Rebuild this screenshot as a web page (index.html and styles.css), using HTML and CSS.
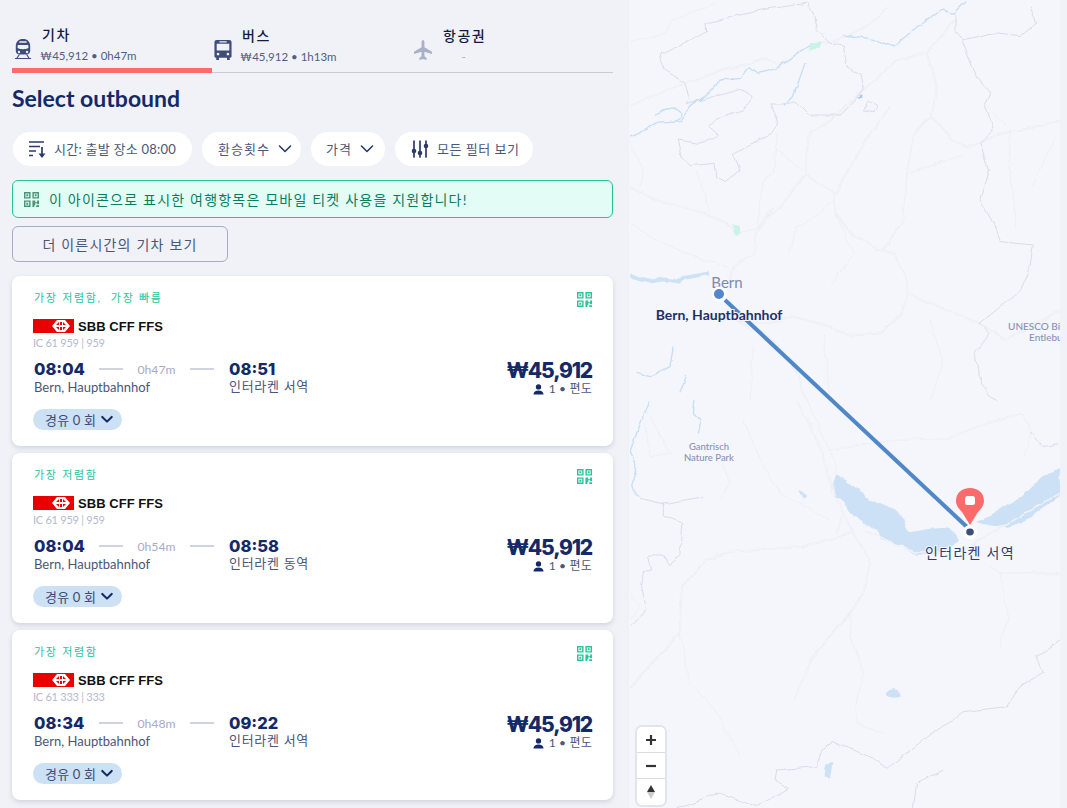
FILE: index.html
```html
<!DOCTYPE html>
<html lang="ko">
<head>
<meta charset="utf-8">
<title>Select outbound</title>
<link rel="stylesheet" href="styles.css">
</head>
<body>
<svg class="sprite" aria-hidden="true">
  <symbol id="i-qr" viewBox="0 0 16 16">
    <path fill-rule="evenodd" d="M0 0h7v7H0zM1.500 1.500v4h4v-4zM9 0h7v7H9zM10.500 1.500v4h4v-4zM0 9h7v7H0zM1.500 10.500v4h4v-4z"/>
    <path d="M2.500 2.500h2v2h-2zM11.500 2.500h2v2h-2zM2.500 11.500h2v2h-2zM9 9h3v2h2V9h2v4h-2v-1h-2v2h-1v2H9zM13 14h3v2h-3z"/>
  </symbol>
  <symbol id="i-chev" viewBox="0 0 14 10">
    <path d="M1.500 2 7 7.500 12.500 2" fill="none" stroke="currentColor" stroke-width="1.600" stroke-linecap="round" stroke-linejoin="round"/>
  </symbol>
  <symbol id="i-chev-bold" viewBox="0 0 14 10">
    <path d="M1.500 2 7 7.500 12.500 2" fill="none" stroke="currentColor" stroke-width="2.400" stroke-linecap="round" stroke-linejoin="round"/>
  </symbol>
  <symbol id="i-person" viewBox="0 0 12 12">
    <circle cx="6" cy="3.200" r="2.900"/>
    <path d="M0.500 11.500C0.500 8.500 3 7 6 7s5.500 1.500 5.500 4.500z"/>
  </symbol>
  <filter id="organic" x="0" y="0" width="100%" height="100%" color-interpolation-filters="sRGB">
    <feTurbulence type="fractalNoise" baseFrequency=".07" numOctaves="3" seed="4" result="n"/>
    <feDisplacementMap in="SourceGraphic" in2="n" scale="5" xChannelSelector="R" yChannelSelector="G" result="d"/>
    <feGaussianBlur in="d" stdDeviation=".3"/>
  </filter>
</svg>

<div class="page">
  <main class="results">
    <nav class="tabs">
      <div class="tab tab-active">
        <svg class="tab-icon" viewBox="0 0 20 22"><path fill="#3f4d7c" fill-rule="evenodd" d="M10 0c5 0 8 3 8 8v5c0 2.500-1.500 4-4 4H6c-2.500 0-4-1.500-4-4V8c0-5 3-8 8-8zM5 6.500c-.5 0-1 .5-1 1V10c1.500 1 3.800 1.300 6 1.300s4.500-.3 6-1.300V7.500c0-.5-.5-1-1-1zM6 2.500v1.500h8V2.500zM5.500 13a1.300 1.300 0 1 0 0 2.600 1.300 1.300 0 0 0 0-2.600zm9 0a1.300 1.300 0 1 0 0 2.600 1.300 1.300 0 0 0 0-2.600z"/><path fill="none" stroke="#3f4d7c" stroke-width="1.200" d="M1 21.500h18M6 17l-3 4.500M14 17l3 4.500"/></svg>
        <div class="tab-text"><span class="tab-name">기차</span><span class="tab-sub">₩45,912 • 0h47m</span></div>
      </div>
      <div class="tab">
        <svg class="tab-icon" viewBox="0 0 20 22"><path fill="#3f4d7c" fill-rule="evenodd" d="M3 0h14c1.500 0 2.500 1 2.500 2.500V18c0 .8-.5 1.500-1.500 1.500h-.5V22h-3v-2.500h-9V22h-3v-2.500H2c-1 0-1.500-.7-1.500-1.500V2.500C.5 1 1.500 0 3 0zM3 4v7.500h14V4zM4.500 14a1.500 1.500 0 1 0 0 3 1.500 1.500 0 0 0 0-3zm11 0a1.500 1.500 0 1 0 0 3 1.500 1.500 0 0 0 0-3zM6 1.300v1.400h8V1.300z"/></svg>
        <div class="tab-text"><span class="tab-name">버스</span><span class="tab-sub">₩45,912 • 1h13m</span></div>
      </div>
      <div class="tab">
        <svg class="tab-icon" viewBox="0 0 20 22"><path fill="#a9b0c8" d="M10 0c1 0 1.600 1.500 1.600 3v5l8.400 5v2.500l-8.400-2.500v5l2.400 2V22L10 21l-4 1v-2l2.400-2v-5L0 15.500V13l8.400-5V3c0-1.500.6-3 1.600-3z"/></svg>
        <div class="tab-text tab-text-plain"><span class="tab-name">항공권</span><span class="tab-sub tab-sub-none">-</span></div>
      </div>
    </nav>

    <h1 class="title">Select outbound</h1>

    <div class="filters">
      <button class="pill pill-time">
        <svg class="pill-icon" viewBox="0 0 18 18"><path fill="none" stroke="#2b3a6b" stroke-width="1.700" d="M1 2h15M1 6.500h11M1 11h7M1 15.500h4M14 7v9.500"/><path fill="#2b3a6b" d="M10.500 13.500h7L14 18z"/></svg>
        <span>시간: 출발 장소 08:00</span>
      </button>
      <button class="pill pill-drop pill-transfers"><span>환승횟수</span><svg class="pill-chev"><use href="#i-chev"/></svg></button>
      <button class="pill pill-drop pill-price"><span>가격</span><svg class="pill-chev"><use href="#i-chev"/></svg></button>
      <button class="pill pill-all">
        <svg class="pill-icon" viewBox="0 0 18 18"><path fill="none" stroke="#2b3a6b" stroke-width="1.700" stroke-linecap="round" d="M3 1v16M9 1v16M15 1v16"/><circle cx="3" cy="11" r="2.300" fill="#2b3a6b"/><circle cx="9" cy="13" r="2.300" fill="#2b3a6b"/><circle cx="15" cy="6" r="2.300" fill="#2b3a6b"/></svg>
        <span>모든 필터 보기</span>
      </button>
    </div>

    <div class="notice">
      <svg class="notice-qr"><use href="#i-qr"/></svg>
      <span>이 아이콘으로 표시한 여행항목은 모바일 티켓 사용을 지원합니다!</span>
    </div>

    <button class="earlier">더 이른시간의 기차 보기</button>

    <article class="card">
      <div class="card-top"><span class="tag">가장 저렴함,&nbsp; 가장 빠름</span><svg class="card-qr"><use href="#i-qr"/></svg></div>
      <div class="brand"><span class="sbb-flag"><svg viewBox="0 0 24 14"><path fill="#fff" d="M8 1h8l5 6-5 6H8L3 7zM10 3 7 6h3V3zm4 0v3h3zM11 3v3h2V3zm0 5v3h2V8zm-4 0 3 3V8zm7 0v3l3-3z" fill-rule="evenodd"/></svg></span><span class="sbb-name">SBB CFF FFS</span></div>
      <div class="train-no">IC 61 959 | 959</div>
      <div class="trip">
        <div class="journey">
          <div class="stop"><strong class="time">08:04</strong><span class="place">Bern, Hauptbahnhof</span></div>
          <div class="dur"><i class="dash"></i><span>0h47m</span><i class="dash"></i></div>
          <div class="stop"><strong class="time">08:51</strong><span class="place place-ko">인터라켄 서역</span></div>
        </div>
        <div class="fare"><span class="price">₩45,912</span><span class="fare-sub"><svg class="person"><use href="#i-person"/></svg>1 • 편도</span></div>
      </div>
      <div class="stops"><span>경유 0 회</span><svg class="stops-chev"><use href="#i-chev-bold"/></svg></div>
    </article>

    <article class="card">
      <div class="card-top"><span class="tag">가장 저렴함</span><svg class="card-qr"><use href="#i-qr"/></svg></div>
      <div class="brand"><span class="sbb-flag"><svg viewBox="0 0 24 14"><path fill="#fff" d="M8 1h8l5 6-5 6H8L3 7zM10 3 7 6h3V3zm4 0v3h3zM11 3v3h2V3zm0 5v3h2V8zm-4 0 3 3V8zm7 0v3l3-3z" fill-rule="evenodd"/></svg></span><span class="sbb-name">SBB CFF FFS</span></div>
      <div class="train-no">IC 61 959 | 959</div>
      <div class="trip">
        <div class="journey">
          <div class="stop"><strong class="time">08:04</strong><span class="place">Bern, Hauptbahnhof</span></div>
          <div class="dur"><i class="dash"></i><span>0h54m</span><i class="dash"></i></div>
          <div class="stop"><strong class="time">08:58</strong><span class="place place-ko">인터라켄 동역</span></div>
        </div>
        <div class="fare"><span class="price">₩45,912</span><span class="fare-sub"><svg class="person"><use href="#i-person"/></svg>1 • 편도</span></div>
      </div>
      <div class="stops"><span>경유 0 회</span><svg class="stops-chev"><use href="#i-chev-bold"/></svg></div>
    </article>

    <article class="card">
      <div class="card-top"><span class="tag">가장 저렴함</span><svg class="card-qr"><use href="#i-qr"/></svg></div>
      <div class="brand"><span class="sbb-flag"><svg viewBox="0 0 24 14"><path fill="#fff" d="M8 1h8l5 6-5 6H8L3 7zM10 3 7 6h3V3zm4 0v3h3zM11 3v3h2V3zm0 5v3h2V8zm-4 0 3 3V8zm7 0v3l3-3z" fill-rule="evenodd"/></svg></span><span class="sbb-name">SBB CFF FFS</span></div>
      <div class="train-no">IC 61 333 | 333</div>
      <div class="trip">
        <div class="journey">
          <div class="stop"><strong class="time">08:34</strong><span class="place">Bern, Hauptbahnhof</span></div>
          <div class="dur"><i class="dash"></i><span>0h48m</span><i class="dash"></i></div>
          <div class="stop"><strong class="time">09:22</strong><span class="place place-ko">인터라켄 서역</span></div>
        </div>
        <div class="fare"><span class="price">₩45,912</span><span class="fare-sub"><svg class="person"><use href="#i-person"/></svg>1 • 편도</span></div>
      </div>
      <div class="stops"><span>경유 0 회</span><svg class="stops-chev"><use href="#i-chev-bold"/></svg></div>
    </article>
  </main>

  <section class="map">
    <svg class="map-canvas" viewBox="0 0 431 808">
      <g filter="url(#organic)">
      <g transform="translate(1 0) scale(.33333)">
        <g class="road-a">
          <path d="M0 315 150 255 250 220 400 175 450 195 500 160 560 130 600 130 640 110 720 75 770 20M0 560 60 590 100 610 200 630 290 670 320 700 375 690 450 620 520 530 525 510 540 400 590 370 700 270 800 180 890 160 980 50M525 520 610 580 620 640 660 700 750 750 790 760 830 830 835 880 815 940 750 1000 670 1010 600 980 490 950 420 970 320 960M890 160 920 260 905 350 970 420 1010 440 1120 400 1290 365M610 590 690 450 780 320M840 520 1000 465M760 750 820 660 830 530 850 400 905 350M830 880 950 930 1050 970 1130 1020 1290 930M300 950 440 1030 500 1120 530 1200M430 620 380 700 370 760 310 800 295 850"/>
        </g>
        <g class="road-b">
          <path d="M0 315 150 255 250 220 400 175 450 195 500 160 560 130 600 130 640 110 720 75 770 20M0 560 60 590 100 610 200 630 290 670 320 700 375 690 450 620 520 530 525 510 540 400 590 370 700 270 800 180 890 160 980 50M525 520 610 580 620 640 660 700 750 750 790 760 830 830 835 880 815 940 750 1000 670 1010 600 980 490 950 420 970 320 960M890 160 920 260 905 350 970 420 1010 440 1120 400 1290 365M610 590 690 450 780 320M840 520 1000 465M760 750 820 660 830 530 850 400 905 350M830 880 950 930 1050 970 1130 1020 1290 930M300 950 440 1030 500 1120 530 1200M430 620 380 700 370 760 310 800 295 850"/>
        </g>
        <path class="road-thin" d="M0 125 100 100 130 60 260 10M440 450 520 510M440 400 430 520 400 540 380 690M200 510 240 640M0 440 40 500 30 560M0 670 80 720 190 770 290 800M480 760 500 680 570 640 610 600M600 860 670 760 620 640M1140 380 1140 500 1160 680M1205 560 1280 400M1070 310 1130 380M900 960 940 1090 900 1200M370 1040 360 1200M580 1000 600 1200"/>
        <g class="river">
          <path d="M0 410 80 370 150 365 180 320 230 285 260 250 290 240 330 235 360 200 385 220 440 205 500 160 540 135M640 105 720 115 790 140 850 90 935 30 970 40 1005 5M525 190 490 290 460 320"/>
          <path class="river-wide" d="M0 825 30 838 60 845 100 838 150 845 170 832 240 820"/>
          <path d="M75 350Q110 310 140 330T130 365"/>
          <path d="M130 1040 120 1100 60 1130 20 1120M170 1125 150 1180"/>
        </g>
        <path class="border" d="M90 165 230 95 228 70 330 45 420 25 530 10 550 40 560 90 600 130 640 135 650 200 690 225 700 265 660 320 630 345 540 345 500 305 460 315 420 315 445 370 420 405 310 460 330 510 285 545 260 530 255 490 180 497 155 470 145 420 205 430 265 410 240 380 270 350 340 330 370 290 330 265 165 315 180 300 165 250 105 210ZM975 40 975 90 1000 120 1080 100 1170 110 1220 70 1200 20M995 120 1040 230 1080 280 1065 310 1090 390 1050 430 1075 510 1050 600 1090 670 1110 725 1210 735 1200 800 1170 870 1130 905 1050 970 1080 1000 1035 1060 1045 1120 1070 1180 1100 1200M700 330 715 305 745 315 730 335Z"/>
        <path class="green" d="M540 130 575 128 570 145 538 155ZM305 672 325 678 332 705 315 708Z"/>
        <path class="pond" d="M682 295 694 283 694 297Z"/>
      </g>
      <g transform="translate(1 400) scale(.33333)">
        <path class="lake" d="M620 225 650 245 690 275 715 300 760 320 800 335 815 355 825 385 845 398 900 388 950 385 975 400 985 420 965 440 900 462 860 465 820 440 790 425 750 415 745 395 715 375 680 350 655 325 635 295 612 290 612 250ZM1290 205 1260 220 1230 235 1205 265 1180 290 1130 320 1085 345 1040 365 1085 375 1135 378 1170 368 1200 350 1250 315 1290 285ZM770 880Q785 865 805 872L810 888Q790 895 770 885ZM590 1095 605 1092 598 1130 586 1128ZM508 270 530 285 520 292Z"/>
        <g class="road-a">
          <path d="M500 0 570 140 610 280 650 360 720 490 700 580 660 640 560 750 490 900M670 395 520 440 300 455 230 480 155 560 150 700 0 860M620 400 640 340M700 390 860 460 1000 450 1080 400 1290 280M1080 500 1110 520 1290 520M600 150 800 120 950 115 1100 60 1180 40"/>
        </g>
        <g class="road-b">
          <path d="M500 0 570 140 610 280 650 360 720 490 700 580 660 640 560 750 490 900M670 395 520 440 300 455 230 480 155 560 150 700 0 860M620 400 640 340M700 390 860 460 1000 450 1080 400 1290 280M1080 500 1110 520 1290 520M600 150 800 120 950 115 1100 60 1180 40"/>
        </g>
        <path class="road-thin" d="M1110 520 1135 650 1105 750M150 700 180 850 250 920 330 1070M660 640 660 700 700 820 680 900 675 970 760 1000M530 0 620 200 600 280M340 60 400 200 450 280 600 360M40 30 60 170 120 160 50 30M280 190 300 250 270 300M1180 40 1205 100 1180 180M0 590 30 620 0 660"/>
        <g class="river">
          <path d="M60 0 20 100 0 150 20 210 5 260 30 290M195 0 190 40 212 65 205 100"/>
        </g>
        <path class="border" d="M30 295 100 312 220 290M100 312 100 345 155 370 150 460 120 500 95 465 55 465 65 510 40 515 35 560 50 630 20 660 0 680M1290 720 1220 770 1240 820 1170 860 1130 920 1000 935 880 1020 770 1105 730 1075 610 1025 580 1045 560 1100 440 1110 435 1145 475 1165 380 1220 265 1180 140 1224M850 1224 860 1150 940 1110M1205 100 1240 140 1290 130"/>
      </g>
      </g>
      <text class="lbl-park" x="80" y="450" text-anchor="middle">Gantrisch</text>
      <text class="lbl-park" x="80" y="461" text-anchor="middle">Nature Park</text>
      <text class="lbl-park lbl-park-lg" x="379" y="330">UNESCO Biosphere</text>
      <text class="lbl-park lbl-park-lg" x="400" y="341">Entlebuch</text>
      <text class="lbl-bern" x="98" y="288" text-anchor="middle">Bern</text>
      <line class="route" x1="96" y1="300" x2="338" y2="527"/>
      <circle class="node-halo" cx="90" cy="294" r="7.500"/>
      <circle class="node-start" cx="90" cy="294" r="5"/>
      <text class="lbl-station" x="90" y="320" text-anchor="middle">Bern, Hauptbahnhof</text>
      <circle class="node-halo" cx="341" cy="532" r="7"/>
      <ellipse class="node-end" cx="341" cy="532" rx="3.800" ry="3.400"/>
      <path class="pin" d="M341 525 333 512C329 508 327 505 327 501 327 493 333 488 341 488S355 493 355 501C355 505 353 508 349 512Z"/>
      <rect class="pin-dot" x="336" y="496" width="10" height="9" rx="2.500"/>
      <text class="lbl-dest" x="341" y="558" text-anchor="middle">인터라켄 서역</text>
    </svg>
    <div class="zoom-ctl">
      <button class="zoom-btn"><svg viewBox="0 0 12 12"><path d="M6 1v10M1 6h10" stroke="#333" stroke-width="2.200" fill="none"/></svg></button>
      <button class="zoom-btn"><svg viewBox="0 0 12 12"><path d="M1 6h10" stroke="#333" stroke-width="2.200" fill="none"/></svg></button>
      <button class="zoom-btn"><svg viewBox="0 0 12 16"><path d="M6 1 10 8H2z" fill="#333"/><path d="M6 15 10 8H2z" fill="#ccc"/></svg></button>
    </div>
  </section>
  <div class="gutter"></div>
</div>
</body>
</html>
```

FILE: styles.css
```css
* { box-sizing: border-box; }
html, body { margin: 0; height: 100%; overflow: hidden; }
body {
  font-family: "Lato", "Noto Sans CJK KR", sans-serif;
  color: #132968;
  background: #f0f2f7;
}
button { font-family: inherit; }
.sprite { position: absolute; width: 0; height: 0; }

.page { display: flex; height: 808px; }
.results { width: 629px; flex: none; padding: 20px 16px 0 12px; overflow: hidden; background: #f0f2f7; }

/* Tabs */
.tabs { display: flex; height: 53px; border-bottom: 1px solid #c9cbd3; }
.tab { width: 200px; height: 53px; display: flex; align-items: center; gap: 8px; padding: 0 0 3px 2px; }
.tab-active { border-bottom: 5px solid #fb6b6b; padding-bottom: 0; }
.tab-icon { width: 18px; height: 20px; margin-top: 9px; flex: none; }
.tab-text { display: flex; flex-direction: column; gap: 3px; }
.tab-text-plain { margin-left: 1px; }
.tab-name { font-size: 14px; font-weight: 500; line-height: 20px; color: #101c46; margin-left: 2px; letter-spacing: 1.500px; }
.tab-sub { font-size: 11.500px; line-height: 16px; color: #525d82; white-space: nowrap; }
.tab-sub-none { text-align: center; color: #a9b0c8; }

.title { margin: 12px 0 0; font-size: 23px; line-height: 26px; font-weight: 700; color: #132968; }

/* Filter pills */
.filters { display: flex; gap: 10px; margin: 21px 0 0 1px; }
.pill {
  height: 34px; display: flex; align-items: center; gap: 8px;
  padding: 0 15px; border: 0; border-radius: 17px; background: #fff;
  font-size: 13px; color: #4b5678; white-space: nowrap;
}
.pill span { position: relative; top: -1px; }
.pill-time { width: 179px; letter-spacing: .25px; }
.pill-all { width: 138px; letter-spacing: .5px; padding-left: 16px; }
.pill-drop { letter-spacing: 1px; padding-right: 0; }
.pill-transfers { width: 99px; padding-left: 16px; }
.pill-price { width: 74px; }
.pill-icon { width: 18px; height: 18px; flex: none; }
.pill-chev { width: 14px; height: 10px; margin-left: 0; color: #2b3a6b; flex: none; }

.notice {
  display: flex; align-items: center; gap: 10px;
  height: 38px; margin-top: 14px; padding: 0 11px;
  background: #e3fdf6; border: 1px solid #2ac395; border-radius: 6px;
  font-size: 14px; letter-spacing: 1.200px; color: #0a7d5e;
}
.notice-qr { width: 15px; height: 15px; fill: #4a9478; flex: none; }

.earlier {
  display: block; width: 216px; height: 36px; margin-top: 8px;
  background: transparent; border: 1px solid #a5acc7; border-radius: 6px;
  font-size: 14px; letter-spacing: 1.200px; color: #4b5678;
}

/* Cards */
.card {
  height: 170px; margin-top: 7px; padding: 14px 21px 0;
  background: #fff; border-radius: 8px;
  box-shadow: 0 2px 5px rgba(60, 70, 110, .18);
}
.earlier + .card { margin-top: 14px; }
.card-top { display: flex; justify-content: space-between; align-items: flex-start; height: 29px; }
.tag { font-size: 11px; line-height: 14px; color: #2ac39a; letter-spacing: 1.700px; padding: 1px 0 0 1px; }
.card-qr { width: 15px; height: 15px; fill: #2ac39a; margin-top: 2px; }
.brand { display: flex; align-items: center; gap: 4px; height: 14px; }
.sbb-flag { width: 41px; height: 14px; background: #eb0000; display: flex; justify-content: flex-end; padding-right: 1px; }
.sbb-flag svg { width: 24px; height: 14px; }
.sbb-name { font-family: "Liberation Sans", sans-serif; font-size: 13px; line-height: 16px; font-weight: 700; color: #111; letter-spacing: .05px; padding-top: 2px; }
.train-no { margin-top: 3px; font-size: 11px; line-height: 14px; color: #b4b9d2; letter-spacing: -.25px; }

.trip { display: flex; justify-content: space-between; margin-top: 8px; }
.journey { display: flex; align-items: flex-start; }
.stop { display: flex; flex-direction: column; padding-left: 1px; }
.time { font-family: "Inter", sans-serif; font-size: 16.500px; line-height: 22px; font-weight: 800; color: #132968; }
.place { font-size: 13px; line-height: 14px; color: #4b5678; white-space: nowrap; }
.place-ko { letter-spacing: .7px; margin-top: -1px; }
.stop:first-child { width: 66px; }
.dur { display: flex; align-items: center; gap: 14.500px; height: 22px; padding-right: 14px; font-size: 12.200px; color: #a6acc6; }
.dash { display: block; width: 24px; height: 2px; background: #cfd3e2; }

.fare { display: flex; flex-direction: column; align-items: flex-end; padding-top: 1px; }
.price { font-family: "Inter", sans-serif; font-size: 21px; line-height: 24px; font-weight: 800; color: #132968; letter-spacing: -1.200px; }
.fare-sub { display: flex; align-items: center; gap: 5px; font-size: 12px; line-height: 14px; color: #4b5678; letter-spacing: .2px; margin-top: -1px; }
.person { width: 11px; height: 11px; fill: #132968; }

.stops {
  display: inline-flex; align-items: center; gap: 5px;
  height: 21px; margin-top: 13px; padding: 0 9px 0 12px;
  background: #cde1f5; border-radius: 11px;
  font-size: 13px; color: #3c4a75; letter-spacing: .2px;
}
.stops-chev { width: 12px; height: 9px; color: #132968; }

/* Map */
.map { position: relative; width: 431px; flex: none; height: 808px; background: #f4f6fb; overflow: hidden; }
.map-canvas { display: block; width: 431px; height: 808px; }
.gutter { flex: 1; background: #f0f2f7; }

.road-a path { fill: none; stroke: #e6e9f1; stroke-width: 5; stroke-linejoin: round; }
.road-b path { fill: none; stroke: #f6f8fc; stroke-width: 2.500; stroke-linejoin: round; }
.road-thin { fill: none; stroke: #e8ebf3; stroke-width: 2; stroke-linejoin: round; }
.river path { fill: none; stroke: #c6def5; stroke-width: 4; stroke-linejoin: round; }
.river .river-wide { stroke-width: 11; stroke: #cde2f5; }
.border { fill: none; stroke: #c6cbe0; stroke-width: 1.800; stroke-linejoin: round; }
.green { fill: #c9f3e6; }
.pond { fill: #a5c7ea; }
.lake { fill: #cce1f5; stroke: #cce1f5; stroke-width: 4; stroke-linejoin: round; }

.lbl-park { font-size: 9.500px; fill: #8890b6; font-weight: 500; }
.lbl-park-lg { font-size: 10px; }
.lbl-bern { font-size: 15px; fill: #7e88ad; }
.lbl-station {
  font-size: 14px; font-weight: 700; fill: #1f2f69;
  paint-order: stroke; stroke: #f4f6fb; stroke-width: 2px;
}
.lbl-dest {
  font-size: 14px; letter-spacing: 1.300px; fill: #2f3c70;
  paint-order: stroke; stroke: #f4f6fb; stroke-width: 2px;
}
.route { stroke: #4f87c9; stroke-width: 4; }
.node-halo { fill: #fff; }
.node-start { fill: #5287cb; }
.node-end { fill: #3d4c7f; }
.pin { fill: #fb6b6b; }
.pin-dot { fill: #fff; }

.zoom-ctl {
  position: absolute; left: 8px; bottom: 3px; width: 28px;
  background: #fff; border-radius: 5px; overflow: hidden;
  box-shadow: 0 0 0 2px rgba(0, 0, 0, .07);
}
.zoom-btn {
  display: flex; align-items: center; justify-content: center;
  width: 100%; height: 26px; padding: 0; border: 0; background: #fff;
  border-bottom: 1px solid #ddd;
}
.zoom-btn:last-child { border-bottom: 0; }
.zoom-btn svg { width: 12px; height: 12px; }
.zoom-btn:last-child svg { height: 20px; }
```
